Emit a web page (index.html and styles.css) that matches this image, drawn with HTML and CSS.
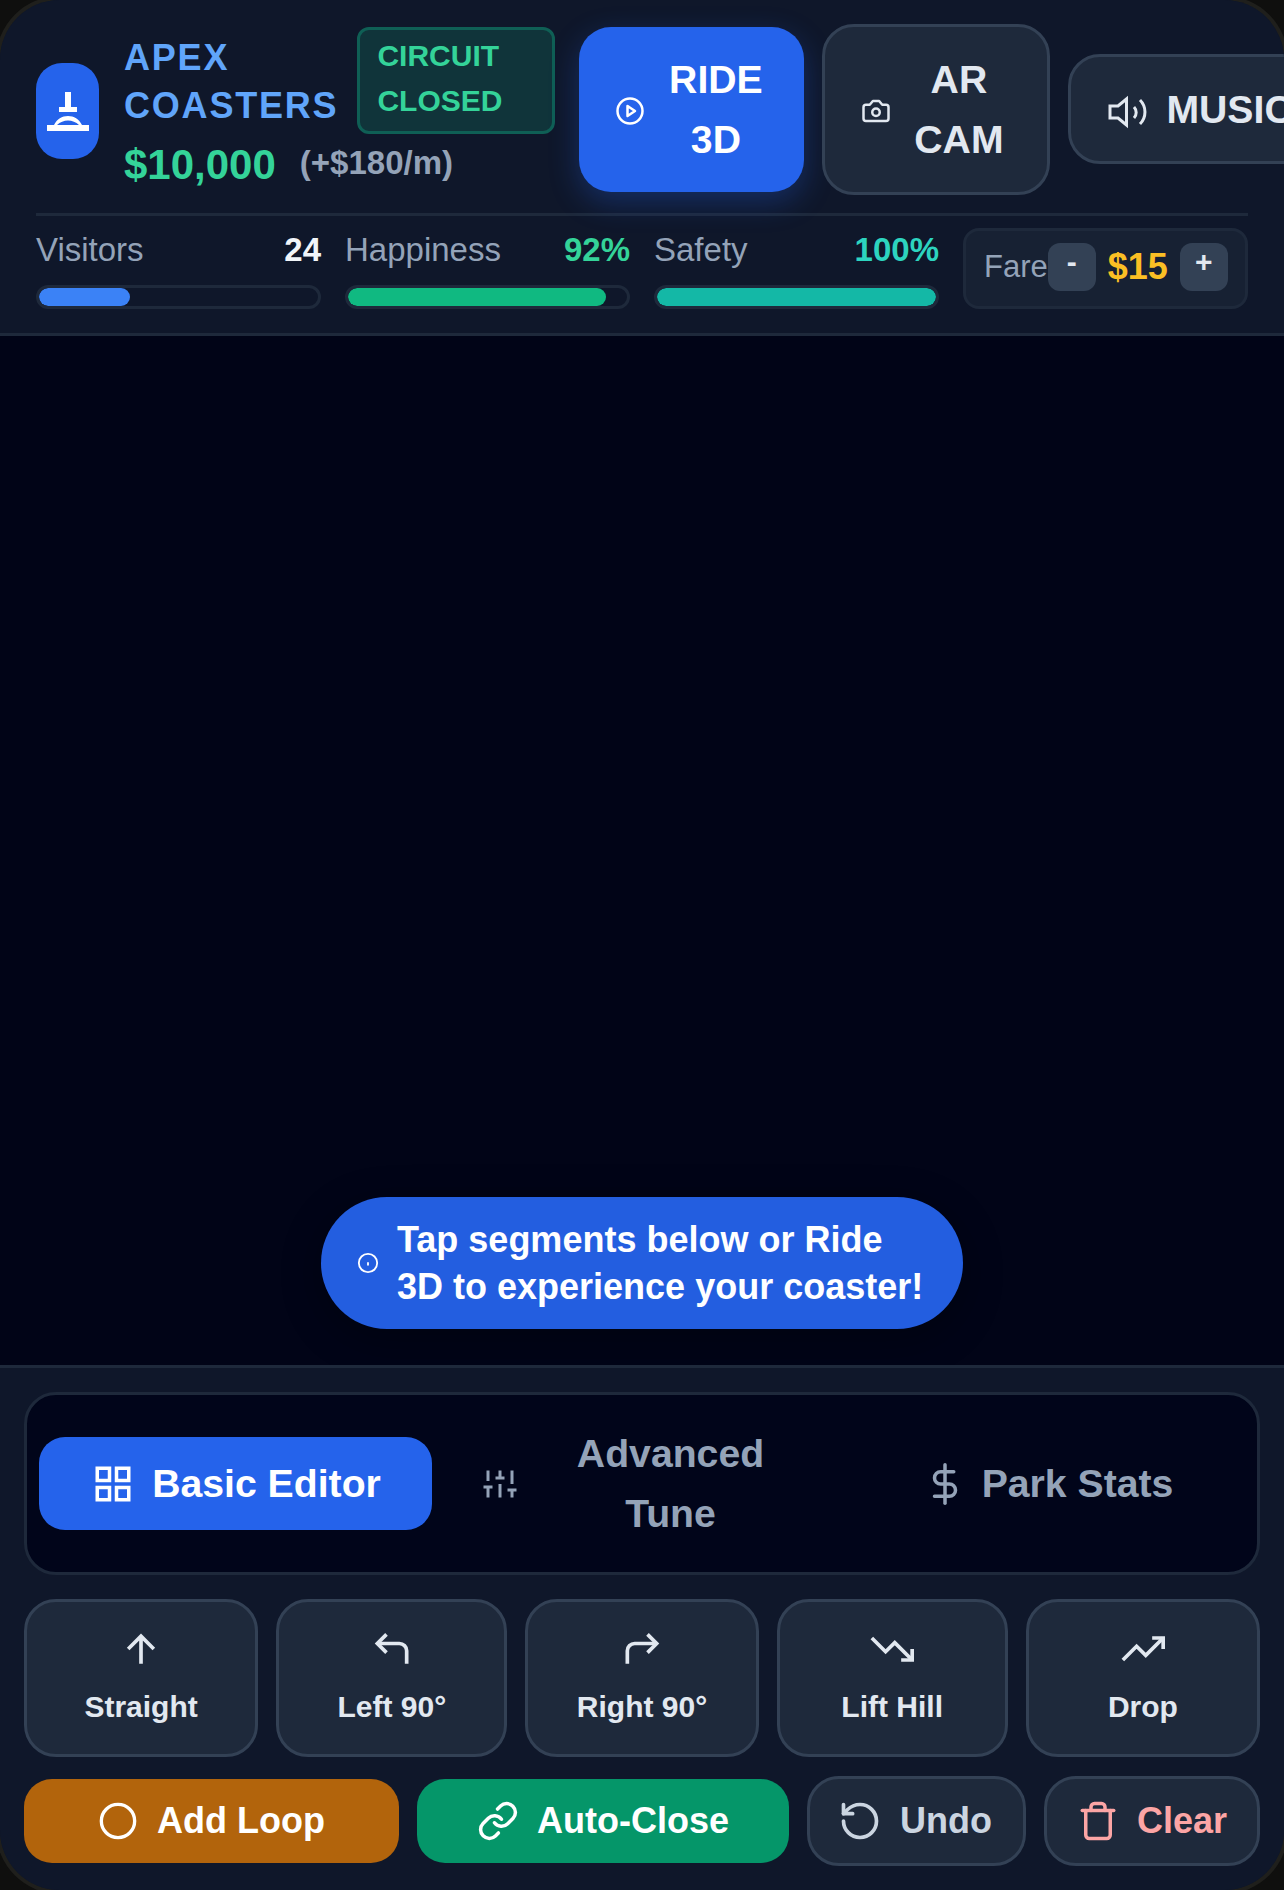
FILE: index.html
```html
<!DOCTYPE html>
<html lang="en">
<head>
    <meta charset="UTF-8">
    <meta name="viewport" content="width=device-width, initial-scale=1.0">
    <title>Apex Coasters</title>
    <link rel="stylesheet" href="styles.css">
</head>
<body>
    <div class="phone">
        <header class="top">
            <div class="top-row">
                <div class="logo">
                    <svg width="42" height="39" viewBox="0 0 42 39"><rect x="18" y="0" width="6" height="15"/><rect x="12" y="15" width="18" height="5"/><path fill-rule="evenodd" d="M0 33 H7 C10 27 15 24 21 24 C27 24 32 27 35 33 H42 V39 H0 Z M10 33 H32 C29 30 25 28.5 21 28.5 C17 28.5 13 30 10 33 Z"/></svg>
                </div>
                <div class="park">
                    <div class="park-head">
                        <div class="park-name">APEX<br>COASTERS</div>
                        <div class="circuit">CIRCUIT<br>CLOSED</div>
                    </div>
                    <div class="money">
                        <span class="cash">$10,000</span>
                        <span class="income">(+$180/m)</span>
                    </div>
                </div>
                <button class="top-btn ride">
                    <svg class="icon-30" viewBox="0 0 24 24"><circle cx="12" cy="12" r="10"/><polygon points="10 8 16 12 10 16"/></svg>
                    <span class="ride-label">RIDE<br>3D</span>
                </button>
                <button class="top-btn ar">
                    <svg class="icon-30" viewBox="0 0 24 24"><path d="M14.5 4h-5L7 7H4a2 2 0 0 0-2 2v9a2 2 0 0 0 2 2h16a2 2 0 0 0 2-2V9a2 2 0 0 0-2-2h-3z"/><circle cx="12" cy="13" r="3"/></svg>
                    <span class="ar-label">AR<br>CAM</span>
                </button>
                <button class="top-btn music">
                    <svg class="icon-speaker" viewBox="0 0 40 40"><polygon points="19.5 7 11 14 3 14 3 26 11 26 19.5 33"/><path d="M27 15a8 8 0 0 1 0 11"/><path d="M33 8a17 17 0 0 1 0 24"/></svg>
                    <span>MUSIC</span>
                </button>
            </div>
            <div class="stats">
                <div class="stat">
                    <div class="stat-head"><span>Visitors</span><b class="white">24</b></div>
                    <div class="bar"><div class="fill blue" style="width: 32.5%"></div></div>
                </div>
                <div class="stat">
                    <div class="stat-head"><span>Happiness</span><b class="green">92%</b></div>
                    <div class="bar"><div class="fill emerald" style="width: 92.4%"></div></div>
                </div>
                <div class="stat">
                    <div class="stat-head"><span>Safety</span><b class="teal">100%</b></div>
                    <div class="bar"><div class="fill tealbar" style="width: 100%"></div></div>
                </div>
                <div class="fare">
                    <span class="fare-label">Fare</span>
                    <button class="fare-btn">-</button>
                    <span class="fare-value">$15</span>
                    <button class="fare-btn">+</button>
                </div>
            </div>
        </header>

        <main class="scene">
            <div class="hint">
                <svg class="icon-hint" viewBox="0 0 24 24"><circle cx="12" cy="12" r="10"/><path d="M12 12v2"/></svg>
                <span>Tap segments below or Ride<br>3D to experience your coaster!</span>
            </div>
        </main>

        <section class="panel">
            <div class="tabs">
                <button class="tab active">
                    <svg class="icon-42 sharp" viewBox="0 0 24 24"><rect x="3" y="3" width="7" height="7"/><rect x="14" y="3" width="7" height="7"/><rect x="3" y="14" width="7" height="7"/><rect x="14" y="14" width="7" height="7"/></svg>
                    <span>Basic Editor</span>
                </button>
                <button class="tab advanced">
                    <svg class="icon-36 sharp" viewBox="0 0 24 24"><path d="M4 21v-7M4 10V3M12 21v-9M12 8V3M20 21v-5M20 12V3M1 14h6M9 8h6M17 16h6"/></svg>
                    <span class="tab-wrap">Advanced Tune</span>
                </button>
                <button class="tab stats-tab">
                    <svg class="icon-42" viewBox="0 0 24 24"><path d="M12 1v22"/><path d="M17 5H9.5a3.5 3.5 0 0 0 0 7h5a3.5 3.5 0 0 1 0 7H6"/></svg>
                    <span>Park Stats</span>
                </button>
            </div>

            <div class="segments">
                <button class="segment">
                    <svg class="icon-44 sharp" viewBox="0 0 24 24"><path d="M12 20V5M5 12l7-7 7 7"/></svg>
                    <span>Straight</span>
                </button>
                <button class="segment">
                    <svg class="icon-44 sharp" viewBox="0 0 24 24"><path d="M9 14L4 9l5-5"/><path d="M20 20v-7a4 4 0 0 0-4-4H4"/></svg>
                    <span>Left 90°</span>
                </button>
                <button class="segment">
                    <svg class="icon-44 sharp" viewBox="0 0 24 24"><path d="M15 14l5-5-5-5"/><path d="M4 20v-7a4 4 0 0 1 4-4h12"/></svg>
                    <span>Right 90°</span>
                </button>
                <button class="segment">
                    <svg class="icon-44 sharp" viewBox="0 0 24 24"><path d="M23 18l-9.5-9.5-5 5L1 6"/><path d="M17 18h6v-6"/></svg>
                    <span>Lift Hill</span>
                </button>
                <button class="segment">
                    <svg class="icon-44 sharp" viewBox="0 0 24 24"><path d="M23 6l-9.5 9.5-5-5L1 18"/><path d="M17 6h6v6"/></svg>
                    <span>Drop</span>
                </button>
            </div>

            <div class="actions">
                <button class="action loop">
                    <svg class="icon-40" viewBox="0 0 24 24"><circle cx="12" cy="12" r="10"/></svg>
                    <span>Add Loop</span>
                </button>
                <button class="action close">
                    <svg class="icon-42" viewBox="0 0 24 24"><path d="M10 13a5 5 0 0 0 7.54.54l3-3a5 5 0 0 0-7.07-7.07l-1.72 1.71"/><path d="M14 11a5 5 0 0 0-7.54-.54l-3 3a5 5 0 0 0 7.07 7.07l1.71-1.71"/></svg>
                    <span>Auto-Close</span>
                </button>
                <button class="action undo">
                    <svg class="icon-44" viewBox="0 0 24 24"><path d="M3 12a9 9 0 1 0 9-9 9.75 9.75 0 0 0-6.74 2.74L3 8"/><path d="M3 3v5h5"/></svg>
                    <span>Undo</span>
                </button>
                <button class="action clear">
                    <svg class="icon-42" viewBox="0 0 24 24"><path d="M3 6h18"/><path d="M19 6v14a2 2 0 0 1-2 2H7a2 2 0 0 1-2-2V6"/><path d="M8 6V4a2 2 0 0 1 2-2h4a2 2 0 0 1 2 2v2"/></svg>
                    <span>Clear</span>
                </button>
            </div>
        </section>
    </div>
</body>
</html>
```

FILE: styles.css
```css
* { box-sizing: border-box; }
html, body { overflow: hidden; }
body { margin: 0; background: #0f0f0e; font-family: "Liberation Sans", Arial, sans-serif; }
button { font-family: inherit; cursor: pointer; }
svg { fill: none; stroke: currentColor; stroke-width: 2; stroke-linecap: round; stroke-linejoin: round; flex-shrink: 0; }
svg.sharp { stroke-linecap: butt; stroke-linejoin: miter; }
.icon-30 { width: 30px; height: 30px; margin-top: 4px; }
.icon-36 { width: 36px; height: 36px; }
.icon-40 { width: 40px; height: 40px; }
.icon-42 { width: 42px; height: 42px; }
.icon-44 { width: 44px; height: 44px; }
.icon-hint { width: 22px; height: 22px; }
.icon-speaker { width: 40px; height: 40px; margin-top: 4px; stroke-width: 3; stroke-linecap: butt; stroke-linejoin: miter; }

/* the ring sits outside the window, only the corners show it */
.phone { width: 1284px; height: 1890px; border-radius: 60px; box-shadow: 0 0 0 4px #1f1f1c; overflow: hidden; background: #0f172a; display: flex; flex-direction: column; }

/* header */
.top { background: #0f172a; border-bottom: 3px solid #1e293b; padding: 24px 36px 0; flex-shrink: 0; height: 336px; }
.top-row { display: flex; align-items: center; height: 170px; }
.logo { width: 63px; height: 96px; margin-top: 4px; background: #2563eb; border-radius: 26px; display: flex; align-items: center; justify-content: center; flex-shrink: 0; margin-right: 25px; }
.logo svg { stroke: none; fill: #fff; }
.park { flex-shrink: 0; margin-right: 24px; }
.park-head { display: flex; align-items: center; gap: 19px; }
.park-name { font-size: 36px; line-height: 48px; font-weight: 700; color: #60a5fa; letter-spacing: 1.8px; padding-top: 4px; }
.circuit { border: 3px solid #0f5f55; background: #10343a; border-radius: 12px; padding: 3px 17px; width: 198px; height: 107px; font-size: 30px; line-height: 45px; font-weight: 700; color: #34d399; }
.money { display: flex; align-items: center; gap: 24px; height: 58px; padding-top: 5px; }
.cash { font-size: 42px; font-weight: 700; color: #34d399; }
.income { font-size: 33px; font-weight: 700; color: #94a3b8; margin-top: -5px; }
.top-btn { display: flex; align-items: center; flex-shrink: 0; font-size: 39.2px; line-height: 60px; font-weight: 700; background: #1e293b; color: #e2e8f0; border: 3px solid #334155; border-radius: 32px; padding: 0 36px; margin-right: 18px; }
.ride { background: #2563eb; color: #fff; border: 0; width: 225px; height: 165px; box-shadow: 0 10px 30px rgba(37, 99, 235, 0.3); }
.ride-label { width: 105px; margin-left: 18px; padding-top: 2px; text-align: center; }
.ar { width: 228px; height: 171px; }
.ar-label { width: 101px; margin-left: 17px; padding-top: 2px; text-align: center; }
.music { height: 110px; gap: 19px; padding-left: 36px; margin-right: 0; padding-top: 2px; }

.stats { display: grid; grid-template-columns: repeat(4, 285px); gap: 24px; border-top: 3px solid #1e293b; margin-top: 19px; padding-top: 12px; }
.stat-head { display: flex; justify-content: space-between; align-items: center; font-size: 33px; line-height: 44px; color: #94a3b8; }
.stat-head b { font-weight: 700; }
.white { color: #f1f5f9; }
.green { color: #34d399; }
.teal { color: #2dd4bf; }
.bar { height: 24px; margin-top: 13px; border: 3px solid #1e293b; border-radius: 12px; background: #0f172a; overflow: hidden; }
.fill { height: 100%; border-radius: 9px; }
.blue { background: #3b82f6; }
.emerald { background: #10b981; }
.tealbar { background: #14b8a6; }
.fare { display: flex; align-items: center; height: 81px; border: 3px solid #1e293b; border-radius: 16px; background: #172133; padding: 0 18px 3px; }
.fare-label { font-size: 31px; color: #94a3b8; }
.fare-btn { width: 48px; height: 48px; border: 0; border-radius: 12px; background: #334155; color: #e2e8f0; font-size: 30px; line-height: 38px; font-weight: 700; padding: 0 0 10px; flex-shrink: 0; }
.fare-value { font-size: 36px; font-weight: 700; color: #fbbf24; margin: 0 12px; }

/* scene area where the track is drawn */
.scene { flex: 1; background: #010417; display: flex; flex-direction: column; align-items: center; justify-content: flex-end; padding-bottom: 36px; }
.hint { display: flex; align-items: center; gap: 18px; width: 642px; height: 132px; padding: 0 36px; background: #235ee0; border-radius: 66px; color: #fff; font-size: 36px; line-height: 47px; font-weight: 700; box-shadow: 0 10px 40px rgba(0, 0, 0, 0.3); }

/* editor panel */
.panel { background: #0f172a; border-top: 3px solid #1e293b; padding: 24px; flex-shrink: 0; }
.tabs { display: grid; grid-template-columns: 393fr 401fr 388fr; gap: 12px; align-items: center; height: 183px; padding: 0 12px; background: #01051a; border: 3px solid #1e293b; border-radius: 32px; }
.tab { display: flex; align-items: center; justify-content: center; gap: 16px; min-height: 93px; background: none; border: 0; border-radius: 26px; padding: 0 38px; color: #94a3b8; font-size: 39.2px; line-height: 60px; font-weight: 700; }
.tab.active { background: #2563eb; color: #fff; gap: 18px; padding-left: 40px; }
.advanced { gap: 20px; padding-right: 42px; }
.stats-tab { padding-right: 43px; }
.tab-wrap { flex: 1; text-align: center; }
.segments { display: grid; grid-template-columns: 234fr 231fr 233fr 231fr 234fr; gap: 18px; margin-top: 24px; }
.segment { display: flex; flex-direction: column; align-items: center; justify-content: center; gap: 13px; height: 158px; background: #1e293b; border: 3px solid #334155; border-radius: 32px; color: #e2e8f0; font-size: 30px; line-height: 45px; font-weight: 700; padding: 0; }
.actions { display: grid; grid-template-columns: 375fr 372fr 219fr 216fr; gap: 18px; align-items: center; margin-top: 19px; }
.action { display: flex; align-items: center; justify-content: center; gap: 19px; height: 84px; border: 0; border-radius: 28px; color: #fff; font-size: 36px; font-weight: 700; padding: 0; }
.loop { background: #b2640c; }
.close { background: #059669; gap: 18px; }
.undo, .clear { height: 90px; background: #1e293b; border: 3px solid #334155; border-radius: 32px; gap: 18px; }
.undo { color: #cbd5e1; padding-right: 3px; }
.clear { color: #fca5a5; }
```
